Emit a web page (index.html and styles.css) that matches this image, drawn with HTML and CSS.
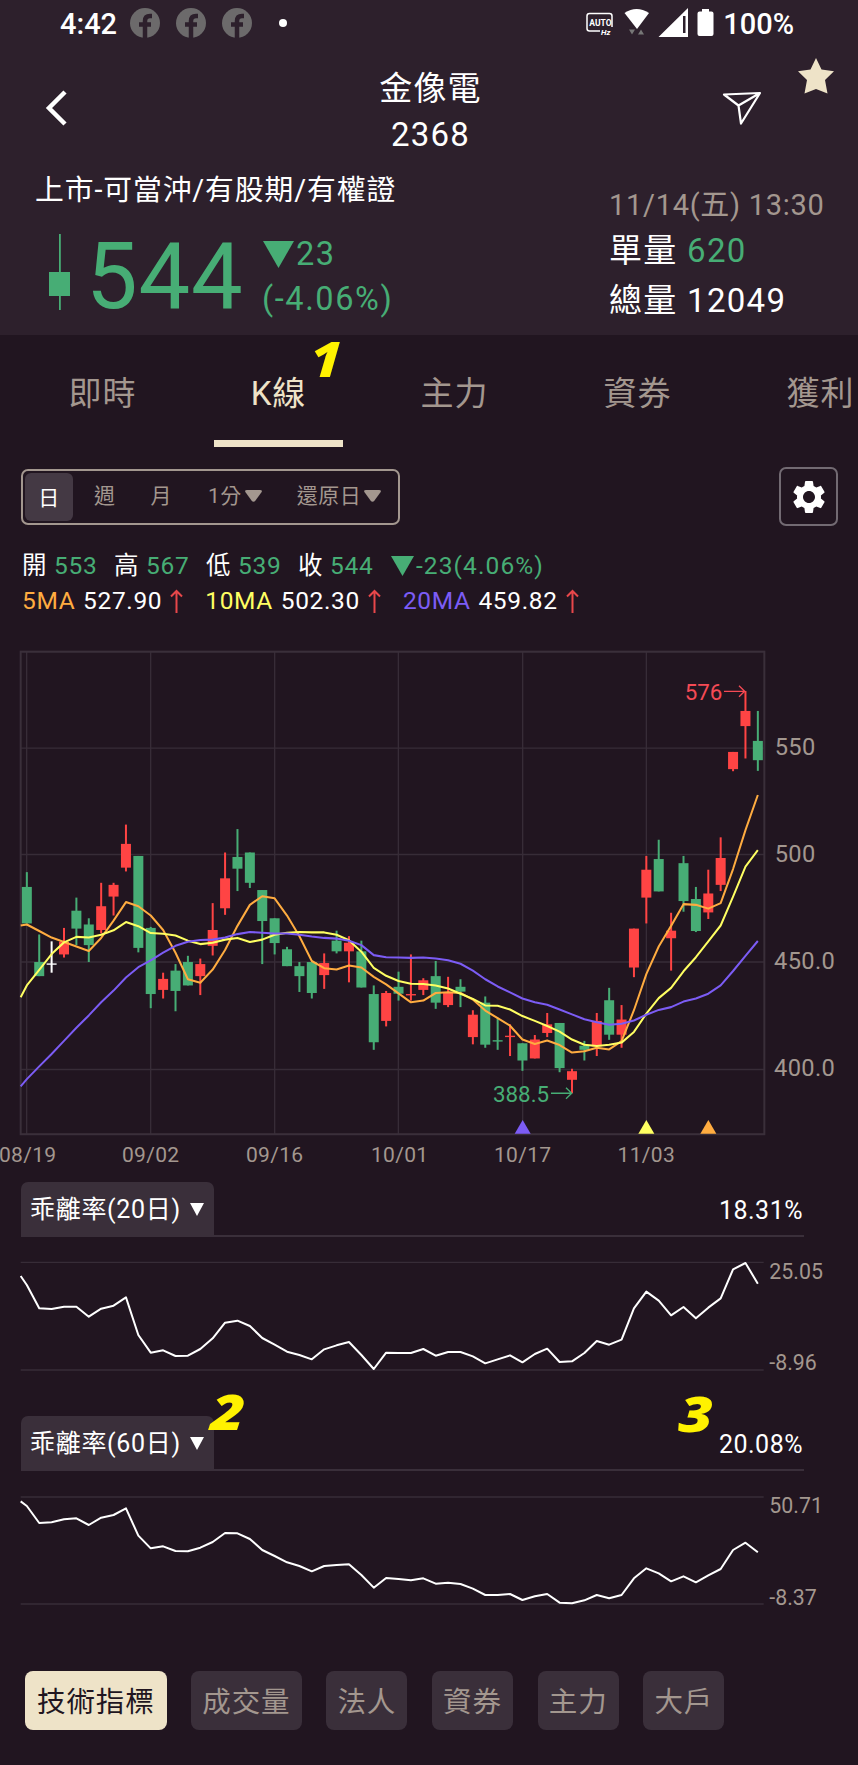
FILE: index.html
```
<!DOCTYPE html>
<html lang="zh-Hant">
  <head>
    <meta charset="UTF-8" />
    <meta name="viewport" content="width=device-width, initial-scale=1.0" />
    <title>金像電 2368</title>
    <link rel="stylesheet" href="styles.css">
  </head>
  <body>
    <header class="header">
      <div class="status">
        <span class="clock">4:42</span>
        <svg class="fb" viewBox="0 0 30 30"><circle cx="15" cy="15" r="15" /><path d="M15 30V13q0-5 5-5h2M9 16.500h12" /></svg>
        <svg class="fb" viewBox="0 0 30 30"><circle cx="15" cy="15" r="15" /><path d="M15 30V13q0-5 5-5h2M9 16.500h12" /></svg>
        <svg class="fb" viewBox="0 0 30 30"><circle cx="15" cy="15" r="15" /><path d="M15 30V13q0-5 5-5h2M9 16.500h12" /></svg>
        <span class="dot"></span>
        <svg class="status-icons" width="130" height="32" viewBox="585 7 130 32">
          <path d="M600 31H589.500Q587 31 587 28.500V16Q587 13.500 589.500 13.500H609.500Q612 13.500 612 16V27" fill="none" stroke="#fff" stroke-width="1.500" />
          <text x="589.300" y="26" class="auto">AUTO</text>
          <text x="601" y="35" class="hz">Hz</text>
          <path d="M624.500 13Q636.500 5 649 13L637 29Z" fill="#fff" />
          <path d="M629 29.500h6l-3 5zM638 34.500h6l-3-5z" fill="#777" />
          <path d="M658.500 37L688 8V37ZM683 16V33H685.500V16Z" fill="#fff" fill-rule="evenodd" />
          <path d="M702 9h7v2.500h2.500q2 0 2 2V34q0 2-2 2h-12q-2 0-2-2V13.500q0-2 2-2H702Z" fill="#fff" />
        </svg>
        <span class="battery">100%</span>
      </div>

      <div class="title-bar">
        <svg class="back" width="23" height="36" viewBox="0 0 23 36"><path d="M20 2L4 18L20 34" /></svg>
        <h1 class="title">金像電<br>2368</h1>
        <svg class="send" width="40" height="36" viewBox="0 0 40 36"><path d="M2 3.500L38 2L19 32.500L16.500 14.500ZM16.500 14.500L38 2" /></svg>
        <svg class="star" width="38" height="37" viewBox="0 0 38 37"><path d="M19 0L24.500 11.500L37 13.200L28 22L30.500 35.500L19 31L7.500 35.500L10 22L1 13.200L13.500 11.500Z" /></svg>
      </div>

      <div class="quote">
        <div class="quote-left">
          <p class="market">上市-可當沖/有股期/有權證</p>
          <div class="price-row">
            <svg class="mini-candle" width="22" height="76" viewBox="0 0 22 76"><path d="M10 0h1.800v76h-1.800zM0 38h21v24H0z" /></svg>
            <span class="price">544</span>
            <div class="change">
              <div><svg width="31" height="27" viewBox="0 0 31 27"><path d="M0 0H31L15.500 27Z" /></svg><span>23</span></div>
              <div>(-4.06%)</div>
            </div>
          </div>
        </div>
        <div class="quote-right">
          <p class="time">11/14(五) 13:30</p>
          <p>單量 <span class="down">620</span></p>
          <p>總量 12049</p>
        </div>
      </div>
    </header>

    <nav class="tabs">
      <a class="tab">即時</a>
      <a class="tab active">K線</a>
      <a class="tab">主力</a>
      <a class="tab wide">資券</a>
      <a class="tab">獲利</a>
    </nav>

    <div class="toolbar">
      <div class="periods">
        <span class="period selected">日</span>
        <span class="period week">週</span>
        <span class="period month">月</span>
        <span class="period minute">1分<svg width="17" height="12" viewBox="0 0 17 12"><path d="M2 0H15Q18 0 16.300 2.500L10.500 10.500Q8.500 13 6.500 10.500L.7 2.500Q-1 0 2 0Z" /></svg></span>
        <span class="period">還原日<svg width="17" height="12" viewBox="0 0 17 12"><path d="M2 0H15Q18 0 16.300 2.500L10.500 10.500Q8.500 13 6.500 10.500L.7 2.500Q-1 0 2 0Z" /></svg></span>
      </div>
      <div class="settings">
        <svg width="40" height="40" viewBox="0 0 24 24"><path d="M19.140 12.940c.04-.3.060-.61.060-.94 0-.32-.02-.64-.070-.94l2.030-1.580c.18-.14.23-.41.120-.61l-1.920-3.320c-.12-.22-.37-.29-.59-.22l-2.390.960c-.5-.38-1.030-.7-1.620-.94l-.36-2.540c-.04-.24-.24-.41-.48-.41h-3.840c-.24 0-.43.170-.47.410l-.36 2.540c-.59.240-1.130.570-1.620.940l-2.390-.96c-.22-.08-.47 0-.59.220L2.740 8.870c-.12.210-.08.470.120.610l2.030 1.580c-.05.300-.09.630-.09.940s.020.640.070.940l-2.030 1.580c-.18.140-.23.410-.12.610l1.920 3.320c.12.220.37.290.59.220l2.390-.96c.5.380 1.030.7 1.620.940l.36 2.540c.05.240.24.410.48.410h3.840c.24 0 .44-.17.470-.41l.36-2.540c.59-.24 1.130-.56 1.620-.94l2.390.960c.22.080.47 0 .59-.22l1.920-3.320c.12-.22.070-.47-.12-.61l-2.010-1.580zM12 15.600c-1.980 0-3.600-1.620-3.600-3.600s1.620-3.600 3.600-3.600 3.600 1.620 3.600 3.600-1.620 3.600-3.600 3.600z" /></svg>
      </div>
    </div>

    <div class="info">
      <div class="info-row">
        <span class="ohlc">開 <b>553</b></span>
        <span class="ohlc">高 <b>567</b></span>
        <span class="ohlc">低 <b>539</b></span>
        <span class="ohlc">收 <b>544</b></span>
        <span class="down diff"><svg width="23" height="20" viewBox="0 0 23 20"><path d="M0 0H23L11.500 20Z" /></svg>-23(4.06%)</span>
      </div>
      <div class="info-row ma-row">
        <span class="ma"><i class="ma5">5MA</i> 527.90<svg width="13" height="24" viewBox="0 0 13 24"><path d="M6.500 24V2M1 7.500L6.500 2L12 7.500" /></svg></span>
        <span class="ma"><i class="ma10">10MA</i> 502.30<svg width="13" height="24" viewBox="0 0 13 24"><path d="M6.500 24V2M1 7.500L6.500 2L12 7.500" /></svg></span>
        <span class="ma"><i class="ma20">20MA</i> 459.82<svg width="13" height="24" viewBox="0 0 13 24"><path d="M6.500 24V2M1 7.500L6.500 2L12 7.500" /></svg></span>
      </div>
    </div>

    <svg class="chart" width="858" height="541" viewBox="0 0 2574 1623">
      <g transform="scale(1 1.0332)">
        <path class="grid" d="M62 314H2293M62 623H2293M62 935H2293M62 1247H2293M80 34V1435M452 34V1435M824 34V1435M1195 34V1435M1568 34V1435M1939 34V1435" />
        <rect class="frame" x="62" y="34" width="2231" height="1401" />
        <g id="candles"></g>
        <g id="averages"></g>
        <path d="M1568 1394L1592 1434H1544Z" fill="#7c5cf5" />
        <path d="M1939 1394L1963 1434H1915Z" fill="#ffff62" />
        <path d="M2125 1394L2149 1434H2101Z" fill="#ffac40" />
        <path class="arrow high-arrow" d="M2172 149H2233M2217 133L2234 149L2217 165" />
        <path class="arrow low-arrow" d="M1653 1316H1714M1698 1300L1715 1316L1698 1332" />
      </g>
      <text class="high" x="2054" y="179">576</text>
      <text class="low" x="1479" y="1386">388.5</text>
      <g class="prices">
        <text x="2324" y="344">550</text>
        <text x="2324" y="665">500</text>
        <text x="2322" y="987">450.0</text>
        <text x="2322" y="1309">400.0</text>
      </g>
      <g class="dates">
        <text x="83" y="1566">08/19</text>
        <text x="452" y="1566">09/02</text>
        <text x="824" y="1566">09/16</text>
        <text x="1199" y="1566">10/01</text>
        <text x="1568" y="1566">10/17</text>
        <text x="1939" y="1566">11/03</text>
      </g>
    </svg>

    <div class="indicator">
      <div class="indicator-name">乖離率(20日)<svg width="14" height="13" viewBox="0 0 14 13"><path d="M0 0H14L7 13Z" /></svg></div>
      <span class="indicator-value">18.31%</span>
    </div>
    <svg class="chart" width="858" height="179" viewBox="0 201 2574 537">
      <path class="grid" d="M62 277H2291M62 600H2291" />
      <polyline id="bias20" class="bias" />
      <g class="scale">
        <text x="2308" y="326">25.05</text>
        <text x="2308" y="601">-8.96</text>
      </g>
    </svg>

    <div class="indicator">
      <div class="indicator-name">乖離率(60日)<svg width="14" height="13" viewBox="0 0 14 13"><path d="M0 0H14L7 13Z" /></svg></div>
      <span class="indicator-value">20.08%</span>
    </div>
    <svg class="chart" width="858" height="200" viewBox="0 243 2574 600">
      <path class="grid" d="M62 321H2291M62 642H2291" />
      <polyline id="bias60" class="bias" />
      <g class="scale">
        <text x="2308" y="370">50.71</text>
        <text x="2308" y="645">-8.37</text>
      </g>
    </svg>

    <div class="buttons">
      <span class="button on">技術指標</span>
      <span class="button">成交量</span>
      <span class="button">法人</span>
      <span class="button">資券</span>
      <span class="button">主力</span>
      <span class="button">大戶</span>
    </div>

    <span class="mark mark-1">1</span>
    <span class="mark mark-2">2</span>
    <span class="mark mark-3">3</span>

    <script src="chart.js"></script>
  </body>
</html>
```
FILE: styles.css
```
* {
  box-sizing: border-box;
}

body {
  margin: 0;
  position: relative;
  width: 858px;
  height: 1765px;
  overflow: hidden;
  background: #211520;
  color: #fff;
  font-family: Roboto, "Noto Sans CJK TC", sans-serif;
}

p,
h1 {
  margin: 0;
  font-weight: 400;
}

svg {
  display: block;
  flex: none;
}

.down {
  color: #47ad75;
}

/* header */
.header {
  height: 335px;
  background: #2d202c;
}

.status {
  display: flex;
  align-items: center;
  height: 48px;
  padding: 0 64px 0 60px;
  font-size: 29px;
  line-height: 48px;
  font-weight: 500;
}

.clock {
  width: 70px;
}

.fb {
  width: 30px;
  height: 30px;
  margin: -2px 16px 0 0;
  fill: #6c6a6b;
}

.fb path {
  fill: none;
  stroke: #2d202c;
  stroke-width: 4.5;
}

.dot {
  width: 8px;
  height: 8px;
  margin: -3px 0 0 11px;
  border-radius: 50%;
  background: #fff;
}

.status-icons {
  margin: -2px 8px 0 auto;
}

.auto {
  fill: #fff;
  font-size: 8.5px;
  font-weight: 700;
}

.hz {
  fill: #fff;
  font-size: 8px;
  font-weight: 700;
  font-style: italic;
}

.title-bar {
  display: flex;
  align-items: flex-start;
  height: 110px;
  padding: 0 23px 0 45px;
}

.back {
  margin-top: 42px;
  fill: none;
  stroke: #fff;
  stroke-width: 4.5;
}

.title {
  flex: 1;
  padding: 18px 0 0 71px;
  font-size: 33px;
  line-height: 46px;
  letter-spacing: 1.2px;
  text-align: center;
}

.send {
  margin: 43px 35px 0 0;
  fill: none;
  stroke: #fff;
  stroke-width: 2.2;
  stroke-linejoin: round;
}

.star {
  margin-top: 10px;
  fill: #eee3c8;
}

.quote {
  display: flex;
  padding-left: 35px;
}

.quote-left {
  width: 574px;
  padding-top: 12px;
}

.market {
  font-size: 28.8px;
  line-height: 40px;
  letter-spacing: 0.9px;
}

.price-row {
  display: flex;
  margin-top: 22px;
  padding-left: 14px;
  color: #47ad75;
  fill: #47ad75;
}

.mini-candle {
  margin-top: 2px;
}

.price {
  width: 176px;
  margin-left: 15px;
  font-size: 92px;
  line-height: 89px;
  letter-spacing: 0.8px;
}

.change {
  font-size: 32.5px;
  line-height: 46px;
  letter-spacing: 1.6px;
}

.change div:first-child {
  display: flex;
  align-items: center;
  gap: 2px;
  height: 44px;
  padding-left: 1px;
}

.quote-right {
  padding-top: 26px;
  font-size: 33px;
  line-height: 49.5px;
  letter-spacing: 1.3px;
}

.quote-right .time {
  font-size: 29px;
  line-height: 42px;
  letter-spacing: 0.7px;
  color: #a3978f;
}

/* tabs */
.tabs {
  display: flex;
  height: 112px;
  padding-left: 14px;
  overflow: hidden;
}

.tab {
  display: flex;
  flex: none;
  flex-direction: column;
  align-items: center;
  width: 176px;
  padding: 12px 0 0 1px;
  font-size: 33px;
  line-height: 93px;
  letter-spacing: 1px;
  color: #a3978f;
}

.tab.wide {
  width: 190px;
}

.tab.active {
  color: #eee3c8;
}

.tab.active::after {
  content: "";
  width: 129px;
  height: 7px;
  background: #eee3c8;
}

/* toolbar */
.toolbar {
  display: flex;
  align-items: center;
  justify-content: space-between;
  margin-top: 20px;
  padding: 0 20px 0 21px;
}

.periods {
  display: flex;
  align-items: center;
  width: 379px;
  height: 56px;
  padding-left: 2px;
  border: 2px solid #a3978f;
  border-radius: 7px;
  font-size: 21px;
  line-height: 51px;
  letter-spacing: 0.5px;
  white-space: nowrap;
  color: #a3978f;
  fill: #a3978f;
}

.period {
  display: flex;
}

.period svg {
  margin: 19px 0 0 3px;
}

.period.selected {
  justify-content: center;
  width: 48px;
  height: 48px;
  border-radius: 6px;
  background: #443944;
  color: #fff;
}

.week {
  margin-left: 21px;
}

.month {
  margin-left: 35px;
}

.minute {
  margin: 0 35px 0 36px;
}

.settings {
  display: flex;
  align-items: center;
  justify-content: center;
  width: 59px;
  height: 59px;
  border: 2px solid #726a72;
  border-radius: 7px;
  fill: #fff;
}

/* open / high / low / close and moving averages */
.info {
  height: 114px;
  padding: 22px 0 0 22px;
  font-size: 24.5px;
  line-height: 36px;
  letter-spacing: 0.7px;
}

.info-row {
  display: flex;
}

.ma-row {
  line-height: 34px;
  letter-spacing: 0.65px;
}

.ohlc {
  width: 92px;
}

.ohlc b {
  font-weight: 400;
  color: #47ad75;
}

.diff {
  display: flex;
  align-items: center;
  gap: 2px;
  margin-left: 1px;
  letter-spacing: 1.1px;
  fill: #47ad75;
}

.ma {
  display: flex;
  align-items: center;
  margin-right: 22px;
  white-space: pre;
}

.ma i {
  margin-right: 1px;
  font-style: normal;
}

.ma svg {
  margin: 0 0 0 8px;
  fill: none;
  stroke: #e8474a;
  stroke-width: 2;
}

.ma5 {
  color: #ffac40;
}

.ma10 {
  color: #ffff62;
}

.ma20 {
  color: #7c5cf5;
}

/* charts */
.grid {
  stroke: #372c37;
  stroke-width: 4;
}

.frame {
  fill: none;
  stroke: #3a2f3a;
  stroke-width: 6;
}

.line,
.bias {
  fill: none;
  stroke-width: 6;
  stroke-linejoin: round;
}

.bias {
  stroke: #fff;
}

.arrow {
  fill: none;
  stroke-width: 4;
}

.high,
.low {
  font-size: 67px;
}

.high {
  fill: #f54a55;
}

.high-arrow {
  stroke: #f54a55;
}

.low {
  fill: #47ad75;
}

.low-arrow {
  stroke: #47ad75;
}

.prices,
.dates,
.scale {
  fill: #a3978f;
}

.prices {
  font-size: 71px;
  letter-spacing: 1px;
}

.dates {
  font-size: 63px;
  letter-spacing: 1px;
  text-anchor: middle;
}

.scale {
  font-size: 64px;
}

.indicator {
  display: flex;
  justify-content: space-between;
  width: 783px;
  height: 55px;
  margin: 1px 0 0 21px;
  border-bottom: 2px solid #3a2f3a;
}

.indicator + .chart + .indicator {
  margin-top: 0;
}

.indicator-name {
  display: flex;
  align-items: center;
  width: 193px;
  height: 55px;
  padding-left: 9px;
  border-radius: 7px 7px 0 0;
  background: #3a2f3a;
  font-size: 25px;
  letter-spacing: 0.7px;
  line-height: 57px;
  fill: #fff;
}

.indicator-name svg {
  margin-left: 9px;
}

.indicator-value {
  margin-right: 1px;
  font-size: 25px;
  line-height: 57px;
  letter-spacing: 0.5px;
}

/* bottom buttons */
.buttons {
  display: flex;
  gap: 24.5px;
  padding-left: 25px;
}

.button {
  height: 59px;
  padding: 0 11.2px;
  border-radius: 8px;
  background: #3a2f3a;
  font-size: 28.5px;
  line-height: 64px;
  letter-spacing: 0.9px;
  color: #a3978f;
}

.button.on {
  padding: 0 12px;
  background: #eee3c8;
  color: #211520;
}

/* step numbers over the screen */
.mark {
  position: absolute;
  font-family: "Open Sans", sans-serif;
  font-size: 49px;
  line-height: 50px;
  font-weight: 800;
  font-style: italic;
  color: #fff200;
  transform: skewX(-4deg) scaleX(1.2);
}

.mark-1 {
  left: 312px;
  top: 333px;
  transform: skewX(-3deg) scaleX(1.1);
}

.mark-2 {
  left: 214px;
  top: 1386px;
}

.mark-3 {
  left: 682px;
  top: 1388px;
}
```
FILE: chart.js
```
// colour, wick top, body top, body bottom, wick bottom
var candles = [
  ["g", 674, 717, 823, 823], ["g", 855, 935, 976, 976], ["w", 875, 939, 943, 966],
  ["r", 836, 876, 913, 922], ["g", 748, 786, 838, 886], ["g", 808, 826, 886, 935],
  ["r", 705, 773, 842, 852], ["r", 705, 711, 745, 800], ["r", 536, 592, 661, 672],
  ["g", 627, 627, 894, 907], ["g", 833, 836, 1028, 1069], ["r", 966, 984, 1016, 1041],
  ["g", 941, 960, 1019, 1078], ["g", 917, 935, 1003, 1003], ["r", 925, 941, 976, 1031],
  ["r", 764, 842, 888, 916], ["r", 617, 692, 779, 798], ["g", 549, 630, 664, 729],
  ["g", 617, 617, 705, 720], ["g", 726, 726, 816, 941], ["g", 808, 808, 880, 913],
  ["g", 891, 898, 947, 947], ["g", 935, 947, 976, 1022], ["g", 935, 935, 1025, 1041],
  ["r", 910, 938, 973, 1013], ["g", 844, 873, 904, 910], ["r", 860, 879, 904, 994],
  ["g", 873, 904, 1009, 1009], ["g", 1003, 1028, 1168, 1190], ["r", 1019, 1025, 1106, 1122],
  ["g", 963, 1007, 1027, 1047], ["r", 913, 1028, 1032, 1047], ["r", 982, 988, 1016, 1031],
  ["g", 932, 976, 1053, 1071], ["r", 978, 1022, 1060, 1066], ["g", 985, 1007, 1021, 1066],
  ["r", 1075, 1088, 1153, 1174], ["g", 1035, 1053, 1175, 1184], ["g", 1097, 1162, 1166, 1190],
  ["r", 1116, 1149, 1153, 1208], ["g", 1171, 1171, 1221, 1251], ["r", 1147, 1160, 1215, 1215],
  ["r", 1083, 1116, 1141, 1153], ["g", 1112, 1112, 1243, 1255], ["r", 1245, 1252, 1277, 1316],
  ["g", 1164, 1178, 1190, 1221], ["r", 1083, 1106, 1180, 1208], ["g", 1010, 1046, 1146, 1161],
  ["r", 1060, 1102, 1146, 1184], ["r", 838, 838, 951, 979], ["r", 627, 667, 748, 823],
  ["g", 580, 636, 730, 730], ["r", 792, 844, 866, 960], ["g", 627, 648, 758, 789],
  ["g", 717, 752, 845, 848], ["r", 667, 736, 791, 810], ["r", 573, 633, 711, 729],
  ["r", 325, 325, 375, 381], ["r", 148, 206, 250, 344], ["g", 206, 293, 349, 380]
];

// first value of every line sits on the left edge of the frame
var ma5 = [829, 826, 845, 864, 877, 890, 903, 865, 815, 761, 773, 800, 842, 908, 985, 995, 957, 900, 830, 769, 744, 750, 800, 860, 932, 953, 957, 945, 951, 978, 1000, 1026, 1052, 1047, 1025, 1023, 1025, 1044, 1076, 1098, 1120, 1160, 1173, 1163, 1176, 1198, 1194, 1184, 1189, 1165, 1075, 970, 890, 830, 767, 769, 780, 764, 665, 552, 450];
var ma10 = [1037, 1003, 958, 912, 878, 862, 864, 856, 843, 819, 831, 851, 853, 858, 873, 883, 879, 870, 865, 877, 870, 856, 850, 848, 849, 849, 856, 872, 905, 952, 975, 990, 998, 999, 1003, 1012, 1027, 1042, 1061, 1062, 1073, 1092, 1106, 1121, 1137, 1160, 1175, 1179, 1175, 1169, 1138, 1085, 1040, 1010, 962, 921, 875, 829, 745, 658, 610];
var ma20 = [1296, 1275, 1238, 1202, 1164, 1126, 1090, 1052, 1018, 980, 950, 930, 908, 888, 876, 871, 870, 864, 854, 848, 850, 852, 852, 856, 861, 865, 867, 873, 886, 915, 921, 922, 923, 922, 925, 930, 940, 960, 985, 1006, 1023, 1041, 1052, 1059, 1073, 1087, 1101, 1110, 1117, 1114, 1105, 1088, 1074, 1066, 1050, 1041, 1027, 1003, 961, 917, 874];
var bias20 = [318, 345, 415, 417, 410, 410, 440, 416, 407, 382, 495, 548, 541, 558, 557, 537, 505, 458, 452, 468, 504, 524, 545, 555, 568, 538, 526, 516, 555, 597, 548, 549, 549, 537, 557, 546, 546, 559, 580, 568, 556, 577, 552, 536, 576, 574, 549, 513, 524, 509, 415, 365, 392, 436, 411, 445, 413, 385, 298, 279, 341];
var bias60 = [334, 348, 399, 397, 388, 385, 405, 383, 375, 355, 437, 475, 469, 483, 484, 473, 456, 429, 430, 447, 480, 498, 517, 528, 544, 528, 525, 523, 555, 593, 564, 567, 571, 565, 581, 578, 582, 596, 615, 615, 612, 630, 619, 612, 638, 640, 631, 615, 625, 615, 565, 535, 550, 574, 559, 577, 556, 537, 480, 458, 487];

var colors = { g: "#47ad75", r: "#ff4444", w: "#ffffff" };

function x(i) {
  return 80.5 + i * 37.17;
}

function points(values) {
  return values
    .map(function (v, i) {
      return (i === 0 ? 62 : x(i - 1).toFixed(1)) + "," + v;
    })
    .join(" ");
}

document.getElementById("candles").innerHTML = candles
  .map(function (c, i) {
    var fill = ' fill="' + colors[c[0]] + '"/>';
    return (
      '<rect x="' + (x(i) - 3) + '" y="' + c[1] + '" width="6" height="' + (c[4] - c[1]) + '"' + fill +
      '<rect x="' + (x(i) - 15) + '" y="' + c[2] + '" width="30" height="' + (c[3] - c[2]) + '"' + fill
    );
  })
  .join("");

document.getElementById("averages").innerHTML =
  '<polyline class="line" stroke="#ffac40" points="' + points(ma5) + '"/>' +
  '<polyline class="line" stroke="#ffff62" points="' + points(ma10) + '"/>' +
  '<polyline class="line" stroke="#7c5cf5" points="' + points(ma20) + '"/>';

document.getElementById("bias20").setAttribute("points", points(bias20));
document.getElementById("bias60").setAttribute("points", points(bias60));
```
